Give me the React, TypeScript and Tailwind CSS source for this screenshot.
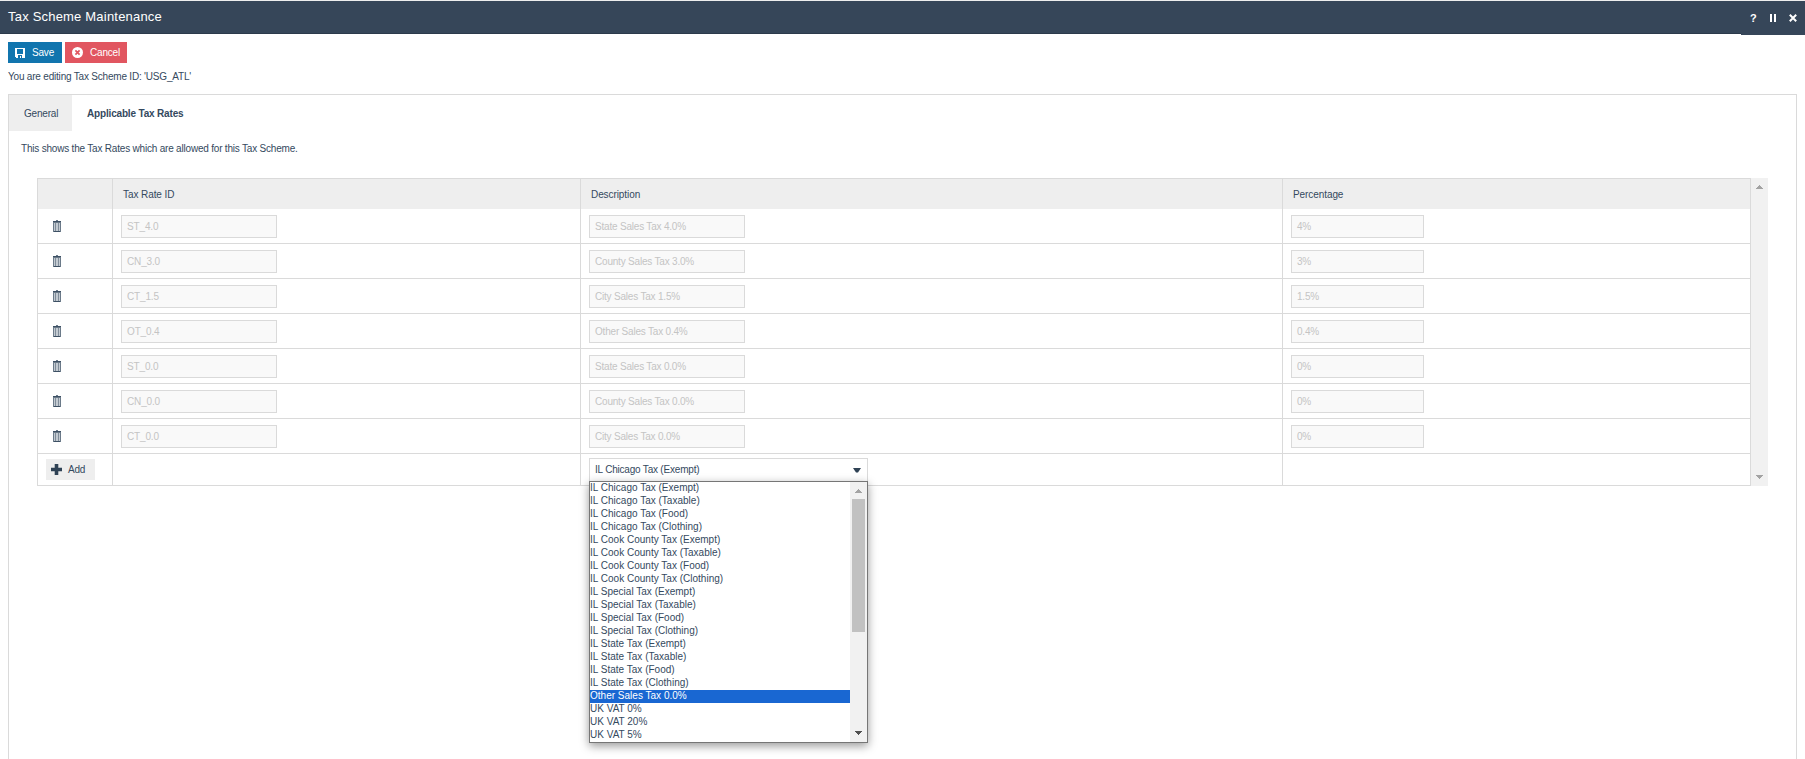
import React from "react";

interface TaxRate {
    id: string;
    description: string;
    percentage: string;
}

const taxRates: TaxRate[] = [
    { id: "ST_4.0", description: "State Sales Tax 4.0%", percentage: "4%" },
    { id: "CN_3.0", description: "County Sales Tax 3.0%", percentage: "3%" },
    { id: "CT_1.5", description: "City Sales Tax 1.5%", percentage: "1.5%" },
    { id: "OT_0.4", description: "Other Sales Tax 0.4%", percentage: "0.4%" },
    { id: "ST_0.0", description: "State Sales Tax 0.0%", percentage: "0%" },
    { id: "CN_0.0", description: "County Sales Tax 0.0%", percentage: "0%" },
    { id: "CT_0.0", description: "City Sales Tax 0.0%", percentage: "0%" },
];

const options = [
    "IL Chicago Tax (Exempt)",
    "IL Chicago Tax (Taxable)",
    "IL Chicago Tax (Food)",
    "IL Chicago Tax (Clothing)",
    "IL Cook County Tax (Exempt)",
    "IL Cook County Tax (Taxable)",
    "IL Cook County Tax (Food)",
    "IL Cook County Tax (Clothing)",
    "IL Special Tax (Exempt)",
    "IL Special Tax (Taxable)",
    "IL Special Tax (Food)",
    "IL Special Tax (Clothing)",
    "IL State Tax (Exempt)",
    "IL State Tax (Taxable)",
    "IL State Tax (Food)",
    "IL State Tax (Clothing)",
    "Other Sales Tax 0.0%",
    "UK VAT 0%",
    "UK VAT 20%",
    "UK VAT 5%",
];

const highlighted = "Other Sales Tax 0.0%";

const SaveIcon = () => (
    <svg width="10" height="10" viewBox="0 0 10 10" shapeRendering="crispEdges">
        <path fill="#fff" fillRule="evenodd" d="M0 0h10v10H1L0 9zM2 1v5h6V1zM3 7v3h4V7z" />
        <path fill="#fff" d="M5 8h1v2H5z" />
    </svg>
);

const CancelIcon = () => (
    <svg width="11" height="11" viewBox="0 0 11 11">
        <circle cx="5.5" cy="5.5" r="5.5" fill="#fff" />
        <path d="M3.4 3.4l4.2 4.2M7.6 3.4L3.4 7.6" stroke="#e15660" strokeWidth="1.7" />
    </svg>
);

const TrashIcon = () => (
    <svg width="8" height="12" viewBox="0 0 8 12" shapeRendering="crispEdges">
        <path fill="#c3cad1" d="M0 3h8v9H0z" />
        <path fill="#6b7a89" d="M3 0h2v1H3zM0 2h8v1H0zM0 3h1v8H0zM7 3h1v8H7zM0 11h8v1H0z" />
        <path fill="#3d5064" d="M0 1h8v1H0zM1 11h6v1H1z" />
        <path fill="#7f8c99" d="M2 3h1v8H2zM5 3h1v8H5z" />
    </svg>
);

const PlusIcon = () => (
    <svg width="11" height="11" viewBox="0 0 11 11">
        <path fill="#2f4255" d="M3.7 0h3.6v3.7H11v3.6H7.3V11H3.7V7.3H0V3.7h3.7z" />
    </svg>
);

const Arrow: React.FC<{ up?: boolean; color: string }> = ({ up, color }) => (
    <svg width="7" height="4" viewBox="0 0 7 4" shapeRendering="crispEdges">
        <path fill={color} d={up ? "M3 0h1v1h1v1h1v1h1v1H0V3h1V2h1V1h1z" : "M0 0h7v1H6v1H5v1H4v1H3V3H2V2H1V1H0z"} />
    </svg>
);

const DisabledField: React.FC<{ value: string; className: string }> = ({ value, className }) => (
    <div className={`mt-[6px] ml-2 h-[23px] border border-[#dadada] bg-[#f9f9f9] pl-[5px] leading-[22px] text-[#c4c4c4] ${className}`}>
        {value}
    </div>
);

const TaxSelect = () => (
    <div className="relative mt-1 ml-2 w-[279px]">
        <div className="flex h-[24px] items-center justify-between border border-[#dadada] bg-white pr-[6px] pl-[5px]">
            <span className="leading-[22px]">IL Chicago Tax (Exempt)</span>
            <svg width="8" height="5" viewBox="0 0 8 5">
                <path fill="#2f4255" d="M0 0h8L5 4.4H3z" />
            </svg>
        </div>
        <div className="absolute top-[23px] left-0 flex h-[262px] w-[279px] border border-[#767676] bg-white shadow-[0_3px_9px_rgba(0,0,0,0.4)]">
            <ul className="flex-1 tracking-[0.01px]">
                {options.map((option) => (
                    <li
                        key={option}
                        className={`h-[13px] leading-[11px] whitespace-nowrap ${option === highlighted ? "bg-[#1967d2] text-white" : ""}`}
                    >
                        {option}
                    </li>
                ))}
            </ul>
            <div className="flex w-[17px] flex-col items-center justify-between bg-[#f1f1f1] pt-[7px] pb-[7px]">
                <Arrow up color="#a3a3a3" />
                <div className="mt-[6px] mb-auto h-[133px] w-[13px] bg-[#c1c1c1]" />
                <Arrow color="#505050" />
            </div>
        </div>
    </div>
);

const TaxRateTable = () => (
    <div className="mt-[22px] ml-7 flex w-[1731px]">
        <div className="w-[1714px] border border-[#dadada]">
            <div className="grid h-[30px] grid-cols-[74px_468px_702px_468px] bg-[#eee] leading-[31px] tracking-[-0.08px]">
                <div />
                <div className="border-l border-[#dadada] pl-[10px]">Tax Rate ID</div>
                <div className="border-l border-[#dadada] pl-[10px]">Description</div>
                <div className="border-l border-[#dadada] pl-[10px]">Percentage</div>
            </div>
            {taxRates.map((rate) => (
                <div key={rate.id} className="grid h-[35px] grid-cols-[74px_468px_702px_468px] border-b border-[#dadada]">
                    <div className="pt-[11px] pl-[15px]">
                        <TrashIcon />
                    </div>
                    <div className="border-l border-[#dadada]">
                        <DisabledField value={rate.id} className="w-[156px] tracking-[-0.15px]" />
                    </div>
                    <div className="border-l border-[#dadada]">
                        <DisabledField value={rate.description} className="w-[156px]" />
                    </div>
                    <div className="border-l border-[#dadada]">
                        <DisabledField value={rate.percentage} className="w-[133px]" />
                    </div>
                </div>
            ))}
            <div className="grid h-[31px] grid-cols-[74px_468px_702px_468px]">
                <div className="pt-[5px] pl-2">
                    <button className="flex h-[21px] w-[49px] items-center gap-[6px] bg-[#eee] pl-[5px]">
                        <PlusIcon />
                        <span>Add</span>
                    </button>
                </div>
                <div className="border-l border-[#dadada]" />
                <div className="border-l border-[#dadada]">
                    <TaxSelect />
                </div>
                <div className="border-l border-[#dadada]" />
            </div>
        </div>
        <div className="flex flex-1 flex-col items-center justify-between bg-[#f1f1f1] py-[7px]">
            <Arrow up color="#a3a3a3" />
            <Arrow color="#a3a3a3" />
        </div>
    </div>
);

export default function App() {
    return (
        <div className="flex h-[759px] w-[1805px] flex-col overflow-hidden bg-white font-['Liberation_Sans',Arial,sans-serif] text-[10px] tracking-[-0.2px] text-[#34495e]">
            {/* Title bar */}
            <header className="flex h-[34px] shrink-0 justify-between border-t border-b border-t-[#eee] border-b-[#2c3a4b] bg-[#364659] text-white">
                <h1 className="pl-2 text-[13px] leading-[31px] tracking-[0.2px]">Tax Scheme Maintenance</h1>
                <div className="flex h-[34px] w-[64px] items-center bg-[#364659] pl-[9px]">
                    <span className="w-[20px] text-[11px] font-bold">?</span>
                    <svg className="mr-[13px]" width="6" height="8" viewBox="0 0 6 8">
                        <path fill="#fff" d="M0 0h2v8H0zM4 0h2v8H4z" />
                    </svg>
                    <svg width="8" height="8" viewBox="0 0 8 8">
                        <path d="M.8.8l6.4 6.4M7.2.8L.8 7.2" stroke="#fff" strokeWidth="2" />
                    </svg>
                </div>
            </header>

            {/* Actions */}
            <div className="mt-2 ml-2 flex shrink-0 gap-[3px] text-white">
                <button className="flex h-[21px] w-[54px] items-center gap-[7px] bg-[#1175ae] pl-[7px]">
                    <SaveIcon />
                    <span>Save</span>
                </button>
                <button className="flex h-[21px] w-[62px] items-center gap-[7px] bg-[#e15660] pl-[7px]">
                    <CancelIcon />
                    <span>Cancel</span>
                </button>
            </div>
            <p className="mt-[7px] ml-2 h-[24px] shrink-0 leading-[14px]">You are editing Tax Scheme ID: 'USG_ATL'</p>

            {/* Tab panel */}
            <main className="mr-2 ml-2 flex-1 border border-b-0 border-[#dadada]">
                <nav className="flex h-9 leading-[37px]">
                    <div className="w-[63px] bg-[#eee] pl-[15px]">General</div>
                    <div className="pl-[15px] font-bold tracking-[-0.17px]">Applicable Tax Rates</div>
                </nav>
                <p className="mt-[11px] ml-3 h-[14px] leading-[14px]">This shows the Tax Rates which are allowed for this Tax Scheme.</p>
                <TaxRateTable />
            </main>
        </div>
    );
}
